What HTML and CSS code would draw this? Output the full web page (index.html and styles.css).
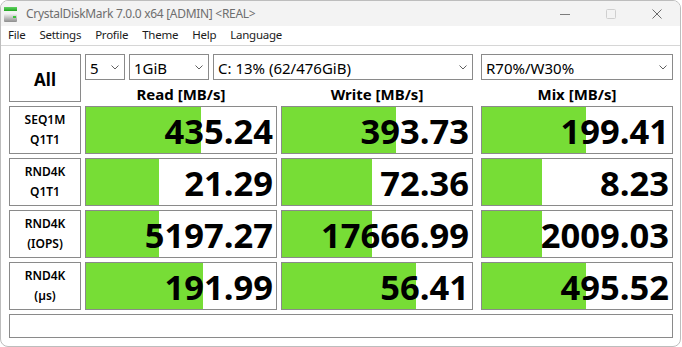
FILE: index.html
```html
<!DOCTYPE html>
<html lang="en">
<head>
    <meta charset="UTF-8">
    <title>CrystalDiskMark 7.0.0 x64 [ADMIN] &lt;REAL&gt;</title>
    <link rel="stylesheet" href="styles.css">
</head>
<body>

    <div class="window">
        <div class="titlebar">
            <svg class="app-icon" width="16" height="16" viewBox="0 0 16 16">
                <defs>
                    <linearGradient id="g-top" x1="0" y1="0" x2="0" y2="1">
                        <stop offset="0" stop-color="#5fd35f"/>
                        <stop offset="1" stop-color="#24a524"/>
                    </linearGradient>
                    <linearGradient id="g-body" x1="0" y1="0" x2="0" y2="1">
                        <stop offset="0" stop-color="#efefef"/>
                        <stop offset="1" stop-color="#8d8d8d"/>
                    </linearGradient>
                </defs>
                <rect x="0" y="1" width="13" height="4" fill="url(#g-top)"/>
                <rect x="0" y="8" width="13" height="8" rx="1" fill="url(#g-body)"/>
                <rect x="9" y="10" width="3" height="2" fill="#3cc43c"/>
            </svg>
            <span class="title">CrystalDiskMark 7.0.0 x64 [ADMIN] &lt;REAL&gt;</span>
            <div class="caption">
                <span class="cap-btn">
                    <svg width="10" height="10" viewBox="0 0 10 10"><path d="M0 5.5h10" stroke="#7c7c7c" stroke-width="1"/></svg>
                </span>
                <span class="cap-btn">
                    <svg width="10" height="10" viewBox="0 0 10 10"><rect x="0.5" y="0.5" width="9" height="9" rx="1" fill="none" stroke="#cfcfcf" stroke-width="1"/></svg>
                </span>
                <span class="cap-btn">
                    <svg width="10" height="10" viewBox="0 0 10 10"><path d="M0.5 0.5l9 9M9.5 0.5l-9 9" stroke="#6a6a6a" stroke-width="1"/></svg>
                </span>
            </div>
        </div>

        <div class="menubar">
            <span>File</span>
            <span>Settings</span>
            <span>Profile</span>
            <span>Theme</span>
            <span>Help</span>
            <span>Language</span>
        </div>

        <div class="main">
            <div class="all-btn">All</div>

            <div class="combos">
                <div class="combo c-count">5 <svg class="chev" width="8" height="5" viewBox="0 0 8 5"><path d="M0.5 0.5l3.5 3.5 3.5-3.5" fill="none" stroke="#606060"/></svg></div>
                <div class="combo c-size">1GiB <svg class="chev" width="8" height="5" viewBox="0 0 8 5"><path d="M0.5 0.5l3.5 3.5 3.5-3.5" fill="none" stroke="#606060"/></svg></div>
                <div class="combo c-drive">C: 13% (62/476GiB) <svg class="chev" width="8" height="5" viewBox="0 0 8 5"><path d="M0.5 0.5l3.5 3.5 3.5-3.5" fill="none" stroke="#606060"/></svg></div>
            </div>
            <div class="combo mix">R70%/W30% <svg class="chev" width="8" height="5" viewBox="0 0 8 5"><path d="M0.5 0.5l3.5 3.5 3.5-3.5" fill="none" stroke="#606060"/></svg></div>

            <div class="head">Read [MB/s]</div>
            <div class="head">Write [MB/s]</div>
            <div class="head mix">Mix [MB/s]</div>

            <div class="label">SEQ1M<br>Q1T1</div>
            <div class="meter" style="--w: 60.5%">435.24</div>
            <div class="meter" style="--w: 60%">393.73</div>
            <div class="meter mix" style="--w: 54.7%">199.41</div>

            <div class="label">RND4K<br>Q1T1</div>
            <div class="meter" style="--w: 38.4%">21.29</div>
            <div class="meter" style="--w: 47.4%">72.36</div>
            <div class="meter mix" style="--w: 31.6%">8.23</div>

            <div class="label">RND4K<br>(IOPS)</div>
            <div class="meter" style="--w: 38.4%">5197.27</div>
            <div class="meter" style="--w: 47.4%">17666.99</div>
            <div class="meter mix" style="--w: 31.6%">2009.03</div>

            <div class="label">RND4K<br>(&micro;s)</div>
            <div class="meter" style="--w: 61.6%">191.99</div>
            <div class="meter" style="--w: 70.5%">56.41</div>
            <div class="meter mix" style="--w: 54.7%">495.52</div>

            <div class="status"></div>
        </div>
    </div>

</body>
</html>
```

FILE: styles.css
```css
body {
    margin: 0;
    padding: 0;
    background-color: #ffffff;
    font-family: 'Noto Sans', 'Open Sans', sans-serif;
    color: #000;
}

.window {
    width: 681px;
    height: 347px;
    box-sizing: border-box;
    border: 1px solid #bdbdbd;
    border-radius: 8px;
    overflow: hidden;
    background: #fff;
}

/* title bar */
.titlebar {
    height: 25px;
    background-color: #f3f3f3;
    display: flex;
    align-items: center;
}

.app-icon {
    margin-left: 3px;
    margin-top: 1px;
    flex: none;
}

.title {
    margin-left: 6px;
    font-size: 12px;
    letter-spacing: -0.3px;
    line-height: 16px;
    padding-top: 1px;
    color: #6e6e6e;
}

.caption {
    margin-left: auto;
    display: flex;
    height: 100%;
}

.cap-btn {
    width: 46px;
    display: flex;
    align-items: center;
    justify-content: center;
    padding-top: 1px;
}

/* menu */
.menubar {
    height: 19px;
    border-bottom: 1px solid #d6d6d6;
    display: flex;
    font-size: 11.5px;
    letter-spacing: -0.25px;
    line-height: 17px;
    color: #1b1b1b;
}

.menubar span {
    padding: 0 7px;
}

/* main benchmark area */
.main {
    padding: 8px 0 0 8px;
    display: grid;
    grid-template-columns: 72px 192px 192px 196px;
    grid-template-rows: 26px 18px repeat(4, 48px) 24px;
    gap: 4px;
}

.mix {
    margin-left: 4px;
}

.all-btn {
    grid-row: 1 / 3;
    border: 1px solid #8a8a8a;
    display: flex;
    align-items: center;
    justify-content: center;
    font-weight: 700;
    font-size: 17px;
    padding-top: 2px;
    box-sizing: border-box;
}

.combos {
    grid-column: 2 / 4;
    display: flex;
    gap: 4px;
}

.combo {
    height: 26px;
    box-sizing: border-box;
    border: 1px solid #8a8a8a;
    display: flex;
    align-items: center;
    padding: 2px 5px 0 4px;
    font-size: 15px;
    line-height: 22px;
    white-space: nowrap;
}

.chev {
    margin-left: auto;
    margin-top: -2px;
}

.c-count { width: 40px; }
.c-size { width: 80px; }
.c-drive { flex: 1; }

.head {
    font-weight: 700;
    font-size: 15px;
    line-height: 20px;
    text-align: center;
    white-space: nowrap;
}

.label {
    border: 1px solid #8a8a8a;
    box-sizing: border-box;
    display: flex;
    align-items: center;
    justify-content: center;
    text-align: center;
    font-size: 12px;
    font-weight: 600;
    line-height: 20px;
}

.meter {
    border: 1px solid #8a8a8a;
    box-sizing: border-box;
    background: linear-gradient(to right, #77dd36 var(--w), #ffffff var(--w));
    text-align: right;
    font-family: 'Open Sans', 'Noto Sans', sans-serif;
    font-weight: 700;
    font-size: 34.5px;
    line-height: 48px;
    padding-right: 3px;
    overflow: hidden;
    white-space: nowrap;
}

.status {
    grid-column: 1 / 5;
    border: 1px solid #8a8a8a;
    box-sizing: border-box;
}
```
